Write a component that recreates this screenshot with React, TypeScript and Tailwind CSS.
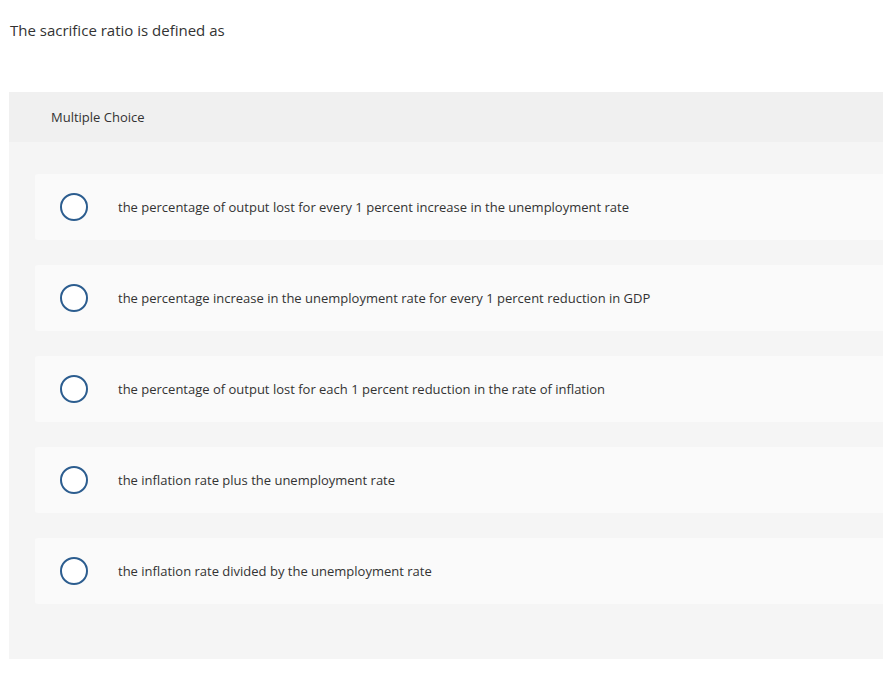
import React from 'react';

const options = [
  'the percentage of output lost for every 1 percent increase in the unemployment rate',
  'the percentage increase in the unemployment rate for every 1 percent reduction in GDP',
  'the percentage of output lost for each 1 percent reduction in the rate of inflation',
  'the inflation rate plus the unemployment rate',
  'the inflation rate divided by the unemployment rate',
];

export default function App() {
  return (
    <div className="min-h-screen bg-white text-[#333] font-['Open_Sans','Liberation_Sans',sans-serif]">
      <p className="pl-[10px] pt-[20px] text-[15px] leading-[20px]">The sacrifice ratio is defined as</p>

      <div className="mt-[52px] ml-[9px] bg-[#f5f5f5] pb-[55px]">
        <div className="h-[50px] bg-[#f0f0f0] pl-[42px] pt-[2px] flex items-center text-[13px]">Multiple Choice</div>

        <div className="pt-[32px] pl-[26px] flex flex-col gap-[25px]">
          {options.map((opt, i) => (
            <label key={i} className="h-[66px] bg-[#fafafa] rounded-l-[3px] flex items-center">
              <span className="ml-[25px] w-[28px] h-[28px] rounded-full border-2 border-[#2c5d8f] bg-white shrink-0" />
              <span className="ml-[30px] pt-[2px] text-[13px]">{opt}</span>
            </label>
          ))}
        </div>
      </div>
    </div>
  );
}
